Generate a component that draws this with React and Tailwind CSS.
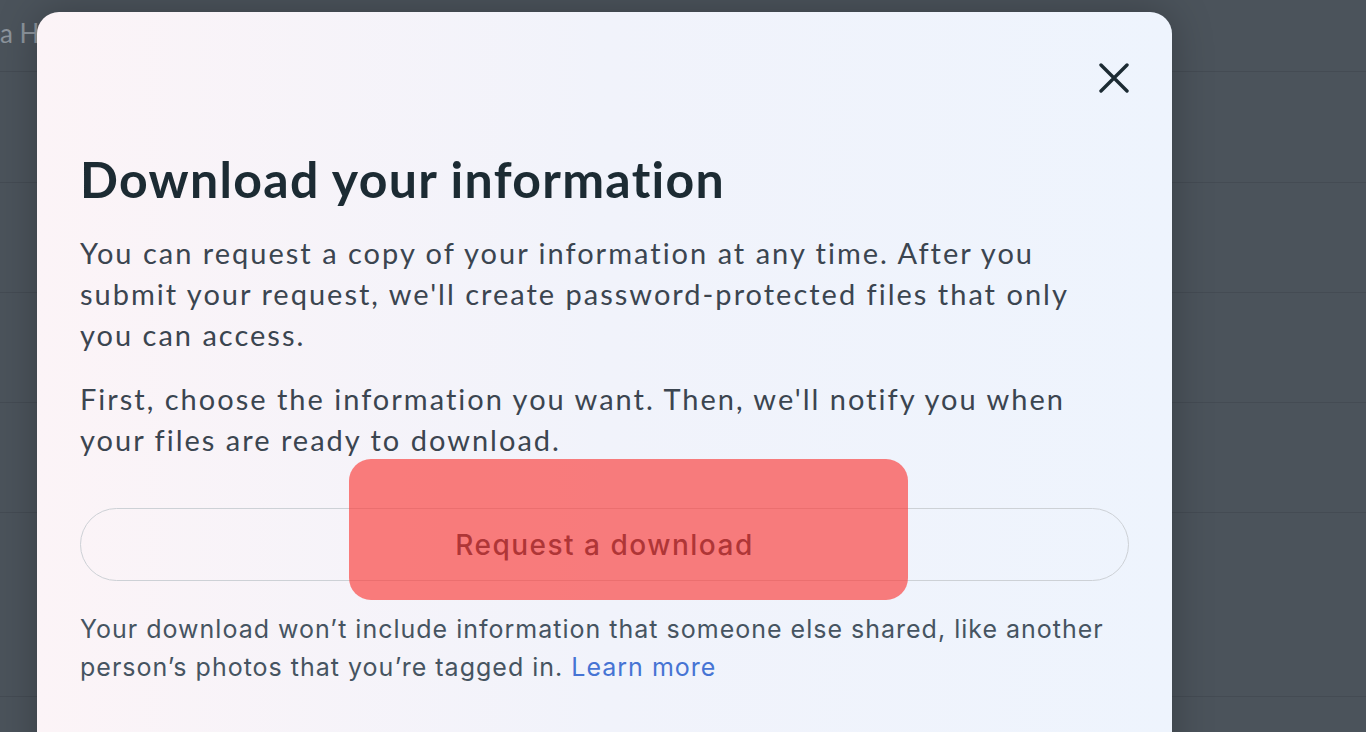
const rows = [72, 111, 110, 110, 110, 184];

function BackdropPage() {
  return (
    <div className="flex flex-col">
      {rows.map((h, i) => (
        <div
          key={i}
          style={{ height: h }}
          className="border-b border-[#444b53] text-[26px] text-[#8c949c]"
        >
          {i === 0 && <div className="pt-[14px] font-['Lato']">a H</div>}
        </div>
      ))}
    </div>
  );
}

function CloseIcon() {
  return (
    <svg width="30" height="30" viewBox="0 0 30 30" fill="none">
      <path d="M2 2L28 28M28 2L2 28" stroke="#1c2b33" strokeWidth="3.4" strokeLinecap="round" />
    </svg>
  );
}

export default function App() {
  return (
    <div className="relative h-[732px] w-[1366px] overflow-hidden bg-[#4b535b] font-['Lato',sans-serif] [font-variant-ligatures:none]">
      <BackdropPage />

      <div className="absolute left-[37px] top-[12px] h-[780px] w-[1135px] rounded-[22px] bg-linear-to-r from-[#fcf4f7] via-[#f1f3fb] to-[#eef4fd] px-[43px] pt-[51px] shadow-[0_0_40px_rgba(0,0,0,0.25)]">
        <div className="flex justify-end">
          <button className="flex h-[30px] w-[30px] items-center justify-center">
            <CloseIcon />
          </button>
        </div>

        <h1 className="mt-[57px] text-[50px] font-bold leading-[58px] tracking-[1.3px] text-[#1c2b33]">
          Download your information
        </h1>

        <p className="mt-[24px] w-[1020px] text-[29px] leading-[41px] tracking-[2px] text-[#3b4550]">
          You can request a copy of your information at any time. After you submit your request, we'll create password-protected files that only you can access.
        </p>
        <p className="mt-[23px] w-[1020px] text-[29px] leading-[41px] tracking-[2px] text-[#3b4550]">
          First, choose the information you want. Then, we'll notify you when your files are ready to download.
        </p>

        <button className="mt-[48px] flex h-[73px] w-full items-center justify-center rounded-full border border-[#cdd1d6] font-['Inter',sans-serif] text-[28px] font-medium tracking-[1.5px] text-[#1c2b33]">
          Request a download
        </button>

        <p className="mt-[29px] font-['Inter',sans-serif] text-[25px] leading-[38px] tracking-[1px] text-[#465461]">
          Your download won’t include information that someone else shared, like another person’s photos that you’re tagged in.{" "}
          <span className="text-[#4674d4]">Learn more</span>
        </p>

        <div className="absolute left-[312px] top-[447px] h-[141px] w-[559px] rounded-[22px] bg-[#fb3d3aa8]" />
      </div>
    </div>
  );
}
